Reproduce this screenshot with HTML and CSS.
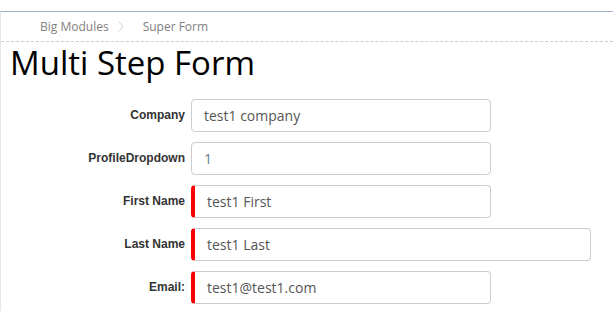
FILE: index.html
```html
<!DOCTYPE html>
<html>
<head>
<meta charset="utf-8">
<link rel="stylesheet" href="styles.css">
</head>
<body>
<div class="page">
  <nav class="breadcrumb">
    <span class="crumb">Big Modules</span>
    <svg class="chev" width="6" height="11" viewBox="0 0 6 11"><polyline points="0.5,0.5 5,5.5 0.5,10.5" fill="none" stroke="#cfcfcf" stroke-width="1"/></svg>
    <span class="crumb">Super Form</span>
  </nav>
  <h1 class="title">Multi Step Form</h1>
  <form class="form">
    <div class="row">
      <label class="label">Company</label>
      <input class="field" type="text" value="test1 company">
    </div>
    <div class="row">
      <label class="label">ProfileDropdown</label>
      <input class="field field-select" type="text" value="1">
    </div>
    <div class="row">
      <label class="label">First Name</label>
      <input class="field required" type="text" value="test1 First">
    </div>
    <div class="row">
      <label class="label">Last Name</label>
      <input class="field required wide" type="text" value="test1 Last">
    </div>
    <div class="row">
      <label class="label">Email:</label>
      <input class="field required" type="text" value="test1@test1.com">
    </div>
  </form>
</div>
</body>
</html>
```

FILE: styles.css
```css
html, body {
  margin: 0;
  padding: 0;
  background: #ffffff;
}
body {
  padding-top: 11px;
}
.page {
  border-top: 1px solid #9eafc6;
  border-left: 1px solid #e6e6e6;
  min-height: 300px;
}
.breadcrumb {
  display: flex;
  align-items: center;
  height: 29px;
  padding-left: 39px;
  border-bottom: 1px dashed #cccccc;
  font-family: "Open Sans", sans-serif;
  font-size: 12px;
  line-height: 29px;
  color: #7f7f7f;
}
.chev {
  margin: 0 19px 0 9px;
  display: block;
}
.title {
  margin: 1px 0 0 0;
  padding-left: 9px;
  font-family: "Open Sans", sans-serif;
  font-weight: 400;
  font-size: 33px;
  line-height: 40px;
  color: #000000;
}
.form {
  margin-top: 16px;
  display: flex;
  flex-direction: column;
  gap: 10px;
  padding-left: 8px;
}
.row {
  display: flex;
  align-items: center;
}
.label {
  width: 176px;
  text-align: right;
  font-family: "Liberation Sans", Arial, sans-serif;
  font-weight: bold;
  font-size: 12px;
  color: #333333;
  padding-bottom: 2px;
}
.field {
  box-sizing: border-box;
  margin: 0 0 0 6px;
  width: 300px;
  height: 33px;
  padding: 0 12px;
  border: 1px solid #cccccc;
  border-radius: 4px;
  background: #ffffff;
  font-family: "Open Sans", sans-serif;
  font-size: 14px;
  color: #555555;
  outline: none;
}
.field-select {
  color: #6a7b91;
}
.required {
  border-left: 4px solid #ff0000;
}
.wide {
  width: 400px;
}
```
